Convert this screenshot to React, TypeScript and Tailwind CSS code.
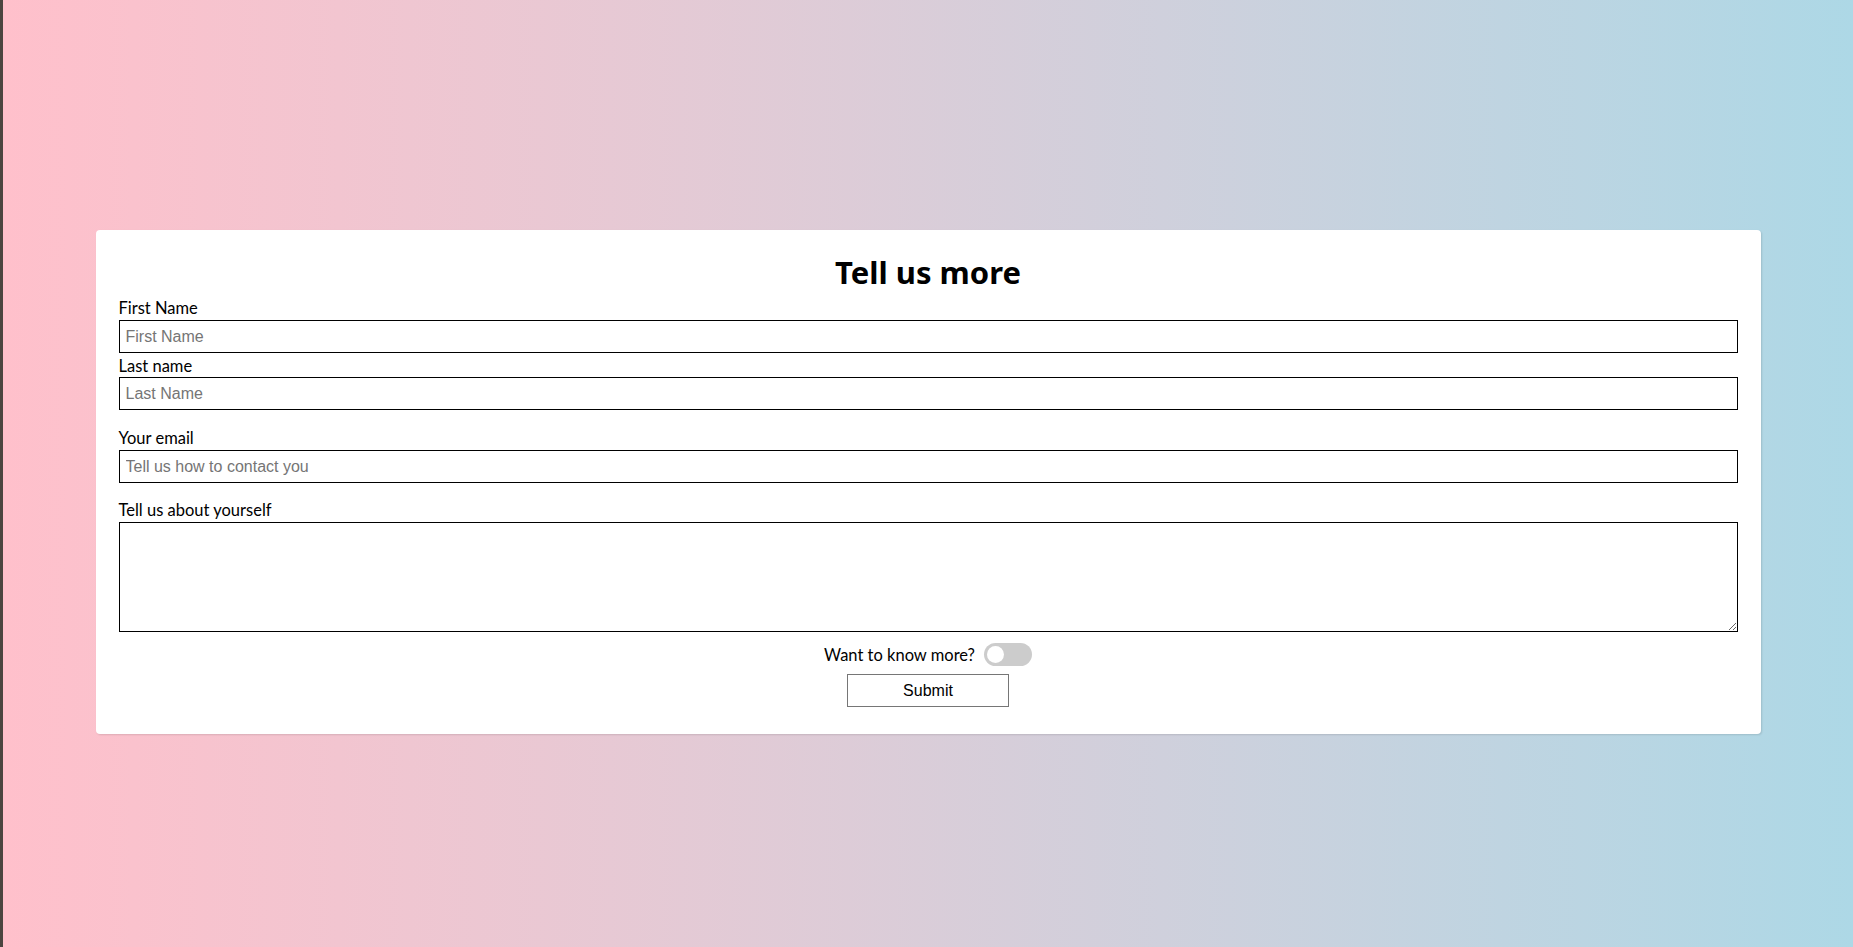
import React, { useState } from "react";

function App() {
  // TOGGLE STATE FOR "WANT TO KNOW MORE?"
  const [more, setMore] = useState<boolean>(false);

  return (
    <div className="flex h-screen w-full overflow-hidden">
      <div className="w-[3px] shrink-0 bg-[#4b4540]" />
      <div className="flex-1 bg-gradient-to-r from-[#ffc0cb] to-[#add8e6] pt-[230px]">
        <form
          className="mx-auto w-[90%] rounded-[4px] bg-white px-[23px] pt-[24px] pb-[27px] shadow-[1px_1px_2px_rgba(0,0,0,0.12)] font-['Lato','Noto_Sans',sans-serif] text-black"
          onSubmit={(e) => e.preventDefault()}
        >
          <h1 className="text-center font-['Noto_Sans',sans-serif] text-[31px] font-bold leading-[37px]">Tell us more</h1>

          <label className="mt-[8px] block text-[16.5px] leading-[18px]">First Name</label>
          <input
            className="mt-[3px] block h-[33px] w-full border border-black px-[6px] font-['Liberation_Sans',Arial,sans-serif] text-[16px] placeholder:text-[#757575] outline-none"
            placeholder="First Name"
          />

          <label className="mt-[4px] block text-[16.5px] leading-[18px]">Last name</label>
          <input
            className="mt-[2px] block h-[33px] w-full border border-black px-[6px] font-['Liberation_Sans',Arial,sans-serif] text-[16px] placeholder:text-[#757575] outline-none"
            placeholder="Last Name"
          />

          <label className="mt-[19px] block text-[16.5px] leading-[18px]">Your email</label>
          <input
            type="email"
            className="mt-[3px] block h-[33px] w-full border border-black px-[6px] font-['Liberation_Sans',Arial,sans-serif] text-[16px] placeholder:text-[#757575] outline-none"
            placeholder="Tell us how to contact you"
          />

          <label className="mt-[18px] block text-[16.5px] leading-[18px]">Tell us about yourself</label>
          <textarea className="mt-[3px] block h-[110px] w-full border border-black px-[6px] py-[4px] font-['Liberation_Sans',Arial,sans-serif] text-[16px] outline-none" />

          <div className="mt-[11px] flex h-[23px] items-center justify-center gap-[9px]">
            <span className="text-[16.5px] leading-[18px]">Want to know more?</span>
            <button
              type="button"
              onClick={() => setMore(!more)}
              className={
                more
                  ? "relative h-[23px] w-[48px] rounded-full bg-[#2196f3]"
                  : "relative h-[23px] w-[48px] rounded-full bg-[#cccccc]"
              }
            >
              <span
                className={
                  more
                    ? "absolute top-[3px] left-[28px] h-[17px] w-[17px] rounded-full bg-white"
                    : "absolute top-[3px] left-[3px] h-[17px] w-[17px] rounded-full bg-white"
                }
              />
            </button>
          </div>

          <div className="mt-[8px] flex justify-center">
            <button
              type="submit"
              className="h-[33px] w-[162px] border border-[#767676] bg-white font-['Liberation_Sans',Arial,sans-serif] text-[16px] text-black"
            >
              Submit
            </button>
          </div>
        </form>
      </div>
    </div>
  );
}

export default App;
